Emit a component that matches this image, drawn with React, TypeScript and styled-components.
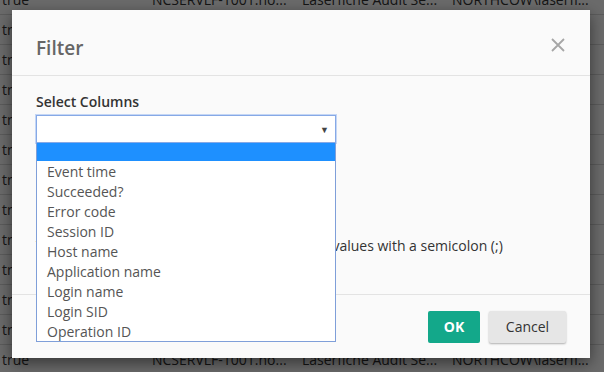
import React from 'react';
import styled, { createGlobalStyle } from 'styled-components';

const GlobalStyle = createGlobalStyle`
  html, body {
    margin: 0;
    padding: 0;
    width: 604px;
    height: 372px;
    overflow: hidden;
    font-family: "Open Sans", "Liberation Sans", sans-serif;
  }
`;

const Page = styled.div`
  position: relative;
  width: 604px;
  height: 372px;
  overflow: hidden;
  background: #fff;
`;

const Grid = styled.div`
  display: flex;
  flex-direction: column;
  margin-top: -15px;
`;

const GridRow = styled.div`
  display: flex;
  height: 30px;
  box-sizing: border-box;
  border-bottom: 1px solid #dcdcdc;
  align-items: center;
`;

const Cell = styled.div`
  width: 150px;
  padding-left: 2px;
  box-sizing: border-box;
  font-size: 14px;
  color: #333;
  white-space: nowrap;
  overflow: hidden;
`;

const Overlay = styled.div`
  position: absolute;
  inset: 0;
  background: rgba(0, 0, 0, 0.58);
`;

const Modal = styled.div`
  position: absolute;
  left: 12px;
  top: 10px;
  width: 578px;
  height: 348px;
  background: #fafafa;
  box-shadow: 0 5px 15px rgba(0, 0, 0, 0.5);
  display: flex;
  flex-direction: column;
`;

const Header = styled.div`
  height: 66px;
  box-sizing: border-box;
  padding: 5px 24px 0;
  border-bottom: 1px solid #e3e3e3;
  display: flex;
  align-items: center;
  justify-content: space-between;
`;

const Title = styled.h4`
  margin: 5px 0 0;
  font-size: 19px;
  font-weight: 600;
  color: #666;
`;

const CloseButton = styled.button`
  border: none;
  background: none;
  padding: 0;
  margin-right: 1px;
  width: 14px;
  height: 14px;
  display: flex;
  cursor: pointer;
`;

const Body = styled.div`
  flex: 1;
  padding: 16px 24px 0;
`;

const Label = styled.div`
  font-size: 14px;
  font-weight: 600;
  line-height: 20px;
  color: #333;
  margin-bottom: 3px;
`;

const SelectWrap = styled.div`
  position: relative;
  width: 300px;
`;

const SelectBox = styled.div`
  height: 28px;
  box-sizing: border-box;
  border: 1px solid #86a9e6;
  box-shadow: 0 0 0 1px #c4d6f5;
  background: #fff;
  display: flex;
  align-items: center;
  justify-content: flex-end;
  padding-right: 6px;
  font-size: 9px;
  color: #444;
`;

const Dropdown = styled.div`
  position: absolute;
  top: 28px;
  left: 0;
  width: 300px;
  height: 199px;
  box-sizing: border-box;
  border: 1px solid #7f9fd9;
  border-top: none;
  background: #fff;
  z-index: 2;
`;

const Option = styled.div<{ active?: boolean }>`
  height: ${p => (p.active ? '18px' : '20px')};
  line-height: 21px;
  padding-left: 10px;
  font-size: 14px;
  color: #555;
  background: ${p => (p.active ? '#1e90ff' : 'transparent')};
`;

const Hint = styled.div`
  margin-top: 93px;
  font-size: 14px;
  line-height: 20px;
  color: #333;
  white-space: nowrap;
`;

const Footer = styled.div`
  height: 64px;
  box-sizing: border-box;
  border-top: 1px solid #e3e3e3;
  padding: 0 24px 0;
  display: flex;
  align-items: center;
  justify-content: flex-end;
  gap: 9px;
`;

const Button = styled.button<{ primary?: boolean }>`
  height: 32px;
  padding: 0;
  width: ${p => (p.primary ? '52px' : '77px')};
  border: none;
  border-radius: 2px;
  font-family: "Open Sans", "Liberation Sans", sans-serif;
  font-size: 14px;
  font-weight: ${p => (p.primary ? 700 : 400)};
  color: ${p => (p.primary ? '#fff' : '#333')};
  background: ${p => (p.primary ? '#13a88a' : '#e6e6e6')};
  box-shadow: ${p => (p.primary ? 'none' : '0 1px 2px rgba(0, 0, 0, 0.3)')};
  cursor: pointer;
`;

const rows = Array.from({ length: 13 });
const columns = ['Event time', 'Succeeded?', 'Error code', 'Session ID', 'Host name', 'Application name', 'Login name', 'Login SID', 'Operation ID'];

export default function App() {
  return (
    <Page>
      <GlobalStyle />
      <Grid>
        {rows.map((_, i) => (
          <GridRow key={i}>
            <Cell>true</Cell>
            <Cell>NCSERVLF-1001.no...</Cell>
            <Cell>Laserfiche Audit Se...</Cell>
            <Cell>NORTHCOW\laserfi...</Cell>
          </GridRow>
        ))}
      </Grid>
      <Overlay />
      <Modal>
        <Header>
          <Title>Filter</Title>
          <CloseButton aria-label="Close">
            <svg width="14" height="14" viewBox="0 0 14 14">
              <path d="M1 1 L13 13 M13 1 L1 13" stroke="#a6a6a6" strokeWidth="1.8" />
            </svg>
          </CloseButton>
        </Header>
        <Body>
          <Label>Select Columns</Label>
          <SelectWrap>
            <SelectBox>▼</SelectBox>
            <Dropdown>
              <Option active />
              {columns.map(c => (
                <Option key={c}>{c}</Option>
              ))}
            </Dropdown>
          </SelectWrap>
          <Hint>To filter on more than one value, separate all values with a semicolon (;)</Hint>
        </Body>
        <Footer>
          <Button primary>OK</Button>
          <Button>Cancel</Button>
        </Footer>
      </Modal>
    </Page>
  );
}
